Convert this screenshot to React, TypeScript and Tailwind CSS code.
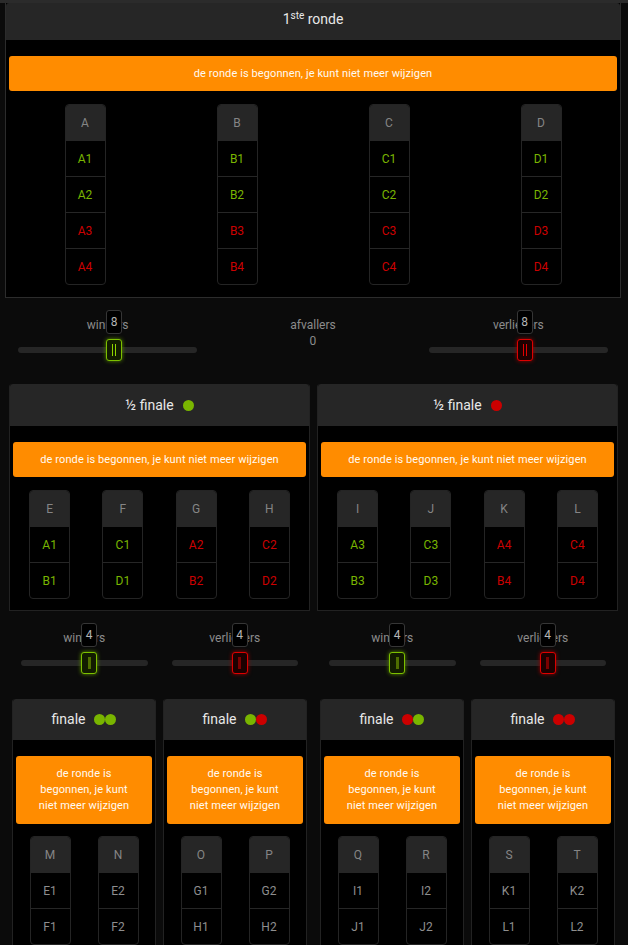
import clsx from 'clsx'

type Tone = 'g' | 'r' | 'n'

const tone: Record<Tone, string> = {
  g: 'text-[#79b500]',
  r: 'text-[#cc0000]',
  n: 'text-[#8e8e8e]',
}

const Dot = ({ t }: { t: Tone }) => (
  <span className={clsx('inline-block h-[11px] w-[11px] rounded-full', t === 'g' ? 'bg-[#79b500]' : 'bg-[#cc0000]')} />
)

const Banner = ({ tall }: { tall?: boolean }) => (
  <div
    className={clsx(
      'rounded-[3px] bg-[#ff8c00] py-[10px] text-center text-[11px] tracking-[0.1px] text-[#fffaf2]',
      tall ? 'px-[18px] leading-[16px]' : 'px-[10px] leading-[15px]'
    )}
  >
    de ronde is begonnen, je kunt niet meer wijzigen
  </div>
)

const Team = ({ name, rows }: { name: string; rows: [string, Tone][] }) => (
  <div className="w-[41px] overflow-hidden rounded-[4px] border border-[#242424] bg-black">
    <div className="flex h-[35px] items-center justify-center bg-[#262626] text-[12px] text-[#858585]">{name}</div>
    {rows.map(([label, t]) => (
      <div
        key={label}
        className={clsx('flex h-[36px] items-center justify-center border-t border-[#262626] text-[12px]', tone[t])}
      >
        {label}
      </div>
    ))}
  </div>
)

const Slider = ({
  label,
  value,
  pos,
  t,
  double,
  pad,
}: {
  label: string
  value: number
  pos: string
  t: Tone
  double?: boolean
  pad: string
}) => (
  <div className={clsx('flex flex-col items-center pt-[20px]', pad)}>
    <div className="text-[12px] leading-[14px] text-[#8c8c8c]">{label}</div>
    <div className="relative mt-[15px] h-[6px] w-full rounded-[3px] bg-[#262626]">
      <div className={clsx('absolute top-0', pos)}>
        <div className="absolute left-0 top-[-37px] flex h-[24px] w-[16px] items-center justify-center rounded-[3px] border border-[#363636] bg-black text-[12px] text-[#b5b5b5]">
          {value}
        </div>
        <div
          className={clsx(
            'absolute left-0 top-[-8px] flex h-[22px] w-[16px] items-center justify-center gap-[2px] rounded-[3px] border',
            t === 'g'
              ? 'border-[#7cc000] bg-[#121c00] shadow-[0_0_4px_#5a8c00]'
              : 'border-[#dd0000] bg-[#1c0000] shadow-[0_0_4px_#990000]'
          )}
        >
          {double ? (
            <>
              <span className={clsx('h-[12px] w-px', t === 'g' ? 'bg-[#8fd400]' : 'bg-[#e00000]')} />
              <span className={clsx('h-[12px] w-px', t === 'g' ? 'bg-[#8fd400]' : 'bg-[#e00000]')} />
            </>
          ) : (
            <span className={clsx('h-[12px] w-[3px]', t === 'g' ? 'bg-[#4f6e00]' : 'bg-[#7a0000]')} />
          )}
        </div>
      </div>
    </div>
  </div>
)

const Header = ({ h, children }: { h: string; children: React.ReactNode }) => (
  <div className={clsx('flex items-center justify-center gap-[9px] rounded-t-[3px] bg-[#262626] text-[14px] text-[#e8e8e8]', h)}>
    {children}
  </div>
)

type Half = {
  dot: Tone
  teams: { name: string; rows: [string, Tone][] }[]
  finals: { dots: [Tone, Tone]; teams: { name: string; rows: [string, Tone][] }[] }[]
}

const halves: Half[] = [
  {
    dot: 'g',
    teams: [
      { name: 'E', rows: [['A1', 'g'], ['B1', 'g']] },
      { name: 'F', rows: [['C1', 'g'], ['D1', 'g']] },
      { name: 'G', rows: [['A2', 'r'], ['B2', 'r']] },
      { name: 'H', rows: [['C2', 'r'], ['D2', 'r']] },
    ],
    finals: [
      {
        dots: ['g', 'g'],
        teams: [
          { name: 'M', rows: [['E1', 'n'], ['F1', 'n']] },
          { name: 'N', rows: [['E2', 'n'], ['F2', 'n']] },
        ],
      },
      {
        dots: ['g', 'r'],
        teams: [
          { name: 'O', rows: [['G1', 'n'], ['H1', 'n']] },
          { name: 'P', rows: [['G2', 'n'], ['H2', 'n']] },
        ],
      },
    ],
  },
  {
    dot: 'r',
    teams: [
      { name: 'I', rows: [['A3', 'g'], ['B3', 'g']] },
      { name: 'J', rows: [['C3', 'g'], ['D3', 'g']] },
      { name: 'K', rows: [['A4', 'r'], ['B4', 'r']] },
      { name: 'L', rows: [['C4', 'r'], ['D4', 'r']] },
    ],
    finals: [
      {
        dots: ['r', 'g'],
        teams: [
          { name: 'Q', rows: [['I1', 'n'], ['J1', 'n']] },
          { name: 'R', rows: [['I2', 'n'], ['J2', 'n']] },
        ],
      },
      {
        dots: ['r', 'r'],
        teams: [
          { name: 'S', rows: [['K1', 'n'], ['L1', 'n']] },
          { name: 'T', rows: [['K2', 'n'], ['L2', 'n']] },
        ],
      },
    ],
  },
]

const firstRound: { name: string; rows: [string, Tone][] }[] = ['A', 'B', 'C', 'D'].map((l) => ({
  name: l,
  rows: [
    [`${l}1`, 'g'],
    [`${l}2`, 'g'],
    [`${l}3`, 'r'],
    [`${l}4`, 'r'],
  ],
}))

export default function App() {
  return (
    <div className="h-[945px] overflow-hidden bg-[#0b0b0b] font-['Roboto',sans-serif]">
      <div className="h-[3px] bg-[#2b2b2b]" />
      <div className="ml-[5px] w-[616px]">
        {/* eerste ronde */}
        <div className="border border-t-0 border-[#2c2c2c] bg-black">
          <Header h="h-[37px] pb-[4px]">
            <span>
              1<sup className="text-[10px]">ste</sup> ronde
            </span>
          </Header>
          <div className="px-[3px] pb-[12px] pt-[16px]">
            <Banner />
            <div className="mt-[13px] grid grid-cols-4 justify-items-center">
              {firstRound.map((t) => (
                <Team key={t.name} {...t} />
              ))}
            </div>
          </div>
        </div>

        <div className="grid h-[86px] grid-cols-3">
          <Slider label="winners" value={8} pos="left-[88px]" t="g" double pad="px-[13px]" />
          <div className="flex flex-col items-center pt-[19px] text-[12px] leading-[16px] text-[#8c8c8c]">
            <span>afvallers</span>
            <span>0</span>
          </div>
          <Slider label="verliezers" value={8} pos="left-[88px]" t="r" double pad="px-[13px]" />
        </div>

        <div className="grid grid-cols-2 gap-[7px] pl-[4px] pr-[3px]">
          {halves.map((h, i) => (
            <div key={i}>
              <div className="rounded-t-[3px] border border-t-0 border-[#222] bg-black">
                <Header h="h-[42px]">
                  <span>½ finale</span>
                  <Dot t={h.dot} />
                </Header>
                <div className="px-[3px] pb-[11px] pt-[16px]">
                  <Banner />
                  <div className="mt-[13px] grid grid-cols-4 justify-items-center">
                    {h.teams.map((t) => (
                      <Team key={t.name} {...t} />
                    ))}
                  </div>
                </div>
              </div>

              <div className="grid h-[88px] grid-cols-2">
                <Slider label="winners" value={4} pos="left-[60px]" t="g" pad="px-[12px]" />
                <Slider label="verliezers" value={4} pos="left-[60px]" t="r" pad="px-[12px]" />
              </div>

              <div className="grid grid-cols-2 gap-[7px] px-[3px]">
                {h.finals.map((f, j) => (
                  <div key={j} className="rounded-t-[3px] border border-t-0 border-[#222] bg-black">
                    <Header h="h-[41px]">
                      <span>finale</span>
                      <span className="flex">
                        <Dot t={f.dots[0]} />
                        <Dot t={f.dots[1]} />
                      </span>
                    </Header>
                    <div className="px-[3px] pb-[12px] pt-[16px]">
                      <Banner tall />
                      <div className="mt-[12px] grid grid-cols-2 justify-items-center">
                        {f.teams.map((t) => (
                          <Team key={t.name} {...t} />
                        ))}
                      </div>
                    </div>
                  </div>
                ))}
              </div>
            </div>
          ))}
        </div>
      </div>
    </div>
  )
}
